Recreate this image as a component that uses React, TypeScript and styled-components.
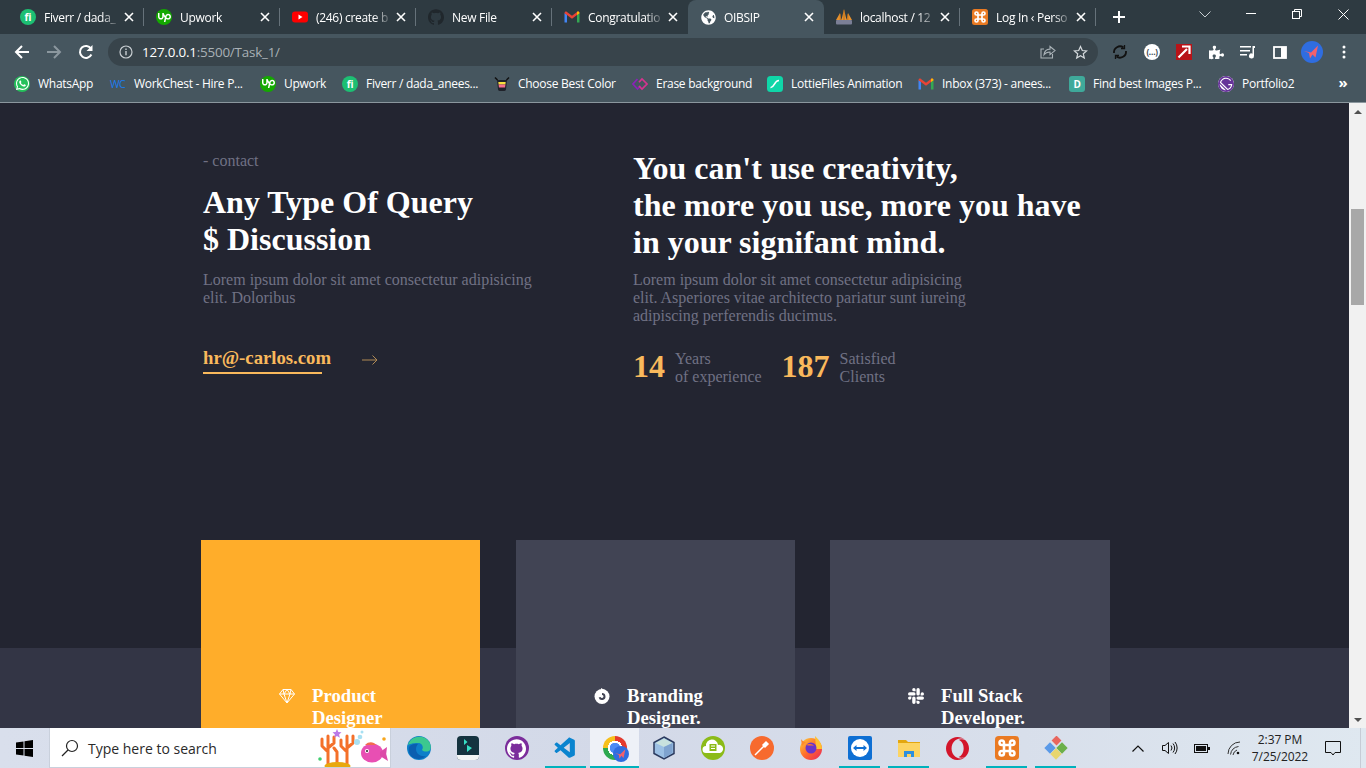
import React from "react";
import styled, { createGlobalStyle } from "styled-components";
import { FaWhatsapp, FaGlobeAmericas, FaPuzzlePiece } from "react-icons/fa";
import { SiUpwork, SiGithub, SiGatsby, SiOpera, SiSlack } from "react-icons/si";
import { VscVscode } from "react-icons/vsc";

const UI = `"Open Sans", "Noto Sans", sans-serif`;
const SERIF = `"Liberation Serif", serif`;

const Global = createGlobalStyle`
  html, body { margin: 0; padding: 0; height: 100%; overflow: hidden; }
  * { box-sizing: border-box; }
  #root { height: 768px; width: 1366px; }
`;

const Screen = styled.div`
  width: 1366px; height: 768px; display: flex; flex-direction: column; overflow: hidden;
  font-family: ${UI};
`;

/* ---------- browser chrome ---------- */
const TabStrip = styled.div`
  height: 34px; background: #2e3a41; display: flex; padding-left: 8px; flex: none;
`;
const Tab = styled.div<{ $active?: boolean; $sep?: boolean }>`
  width: 136px; height: 34px; display: flex; align-items: center; padding: 0 10px 0 12px; gap: 8px;
  position: relative; color: #fff; font-size: 12px;
  background: ${(p) => (p.$active ? "#46565f" : "transparent")};
  border-radius: ${(p) => (p.$active ? "8px 8px 0 0" : "0")};
  &::after {
    content: ""; position: absolute; right: 0; top: 8px; height: 18px; width: 1px;
    background: ${(p) => (p.$sep ? "#66727a" : "transparent")};
  }
`;
const TabTitle = styled.span`
  flex: 1; min-width: 0; white-space: nowrap; letter-spacing: -0.3px;
  -webkit-mask-image: linear-gradient(90deg, #000 80%, rgba(0, 0, 0, 0.25) 100%);
  mask-image: linear-gradient(90deg, #000 80%, rgba(0, 0, 0, 0.25) 100%);
`;
const NewTab = styled.div`
  width: 46px; height: 34px; display: flex; align-items: center; justify-content: center;
`;
const StripSpacer = styled.div`flex: 1;`;
const WinButton = styled.div`
  width: 46px; height: 28px; display: flex; align-items: center; justify-content: center;
`;
const Toolbar = styled.div`
  height: 32px; background: #46565f; display: flex; align-items: flex-end; padding: 0 6px; flex: none;
`;
const ToolButton = styled.div`
  width: 32px; height: 28px; flex: none; display: flex; align-items: center; justify-content: center;
`;
const AddressBar = styled.div`
  flex: 1; margin: 0 6px; height: 28px; border-radius: 14px; background: #38444b;
  display: flex; align-items: center; padding: 0 2px 0 11px; font-size: 13.4px; letter-spacing: -0.2px;
`;
const Url = styled.span`flex: 1; margin-left: 9px; color: #a9b1b6; b { font-weight: 400; color: #fff; }`;
const AddrIcon = styled.span`width: 32px; display: flex; justify-content: center;`;
const Bookmarks = styled.div`
  height: 37px; background: #46565f; border-bottom: 1px solid #8b979e; display: flex; align-items: center;
  padding: 0 0 1px 6px; gap: 1px; flex: none; position: relative;
`;
const Bookmark = styled.div<{ $w: number }>`
  width: ${(p) => p.$w}px; flex: none; display: flex; align-items: center; gap: 8px; padding-left: 8px;
  color: #fff; font-size: 12px; letter-spacing: -0.28px; white-space: nowrap;
`;
const More = styled.div`
  margin-left: auto; width: 46px; text-align: center; color: #fff; font-size: 15px; font-weight: 700; line-height: 14px; padding-bottom: 3px;
`;
const Disc = styled.span<{ $bg: string; $fg?: string; $r?: string }>`
  width: 16px; height: 16px; flex: none; display: inline-flex; align-items: center; justify-content: center;
  border-radius: ${(p) => p.$r ?? "50%"}; background: ${(p) => p.$bg}; color: ${(p) => p.$fg ?? "#fff"};
`;
const Wc = styled.span`
  width: 16px; flex: none; color: #1a7cf0; font-size: 10.5px; letter-spacing: -0.6px; line-height: 16px;
`;
const DiscLetter = styled.span`font-size: 10px; font-weight: 700; line-height: 1;`;
const Ellip = styled.span`font-size: 8px; font-weight: 700; color: #38444b; line-height: 1; letter-spacing: -0.5px;`;

/* ---------- page ---------- */
const Viewport = styled.div`flex: 1; min-height: 0; display: flex;`;
const Page = styled.main`
  flex: 1; min-width: 0; background: #232531; font-family: ${SERIF}; display: flex; flex-direction: column;
`;
const Intro = styled.section`
  height: 437px; flex: none; padding: 46px 0 0 203px; display: grid; grid-template-columns: 430px 480px; align-items: start;
`;
const LeftCol = styled.div`padding-top: 3px;`;
const RightCol = styled.div`padding-top: 1px;`;
const Eyebrow = styled.div`color: #707184; font-size: 16px; line-height: 18px;`;
const Heading = styled.h2<{ $top?: number }>`
  margin: ${(p) => p.$top ?? 0}px 0 0; color: #fff; font-size: 32px; line-height: 37px; font-weight: 700; white-space: nowrap;
`;
const Body = styled.p<{ $w: number; $mt: number }>`
  margin: ${(p) => p.$mt}px 0 0; width: ${(p) => p.$w}px; color: #707184; font-size: 16px; line-height: 18px;
`;
const EmailRow = styled.div`margin-top: 41px; display: flex; align-items: center; height: 20px;`;
const Email = styled.a`color: #f9b95c; font-size: 18.72px; font-weight: 700; line-height: 20px;`;
const ArrowSlot = styled.span`margin-left: 31px; display: flex; padding-top: 3px;`;
const EmailRule = styled.div`width: 119px; height: 2px; margin-top: 4px; background: #f9b95c;`;
const Stats = styled.div`margin-top: 23px; display: flex; gap: 20px;`;
const Stat = styled.div`display: flex; align-items: center; gap: 10px;`;
const StatNum = styled.span`color: #f9b95c; font-size: 32px; font-weight: 700; line-height: 36px; padding-bottom: 3px;`;
const StatLabel = styled.span`color: #707184; font-size: 16px; line-height: 18px;`;

const Services = styled.section`
  flex: 1; min-height: 0; overflow: hidden; display: flex; padding-left: 201px;
  background: linear-gradient(#232531 108px, #333545 108px);
`;
const Card = styled.article<{ $accent?: boolean; $w: number; $gap: number }>`
  width: ${(p) => p.$w}px; margin-right: ${(p) => p.$gap}px; flex: none; height: 300px;
  background: ${(p) => (p.$accent ? "#ffad2a" : "#414454")};
  padding: 145px 0 0 78px; display: flex; gap: 17px; align-items: flex-start;
`;
const CardIcon = styled.span`width: 16px; height: 22px; display: flex; align-items: center; flex: none; color: #fff;`;
const CardTitle = styled.h3`margin: 0; color: #fff; font-size: 18.72px; line-height: 22px; font-weight: 700;`;

const ScrollBar = styled.div`
  width: 17px; flex: none; background: #f1f1f1; display: flex; flex-direction: column; align-items: center; position: relative;
`;
const ScrollArrow = styled.div<{ $down?: boolean }>`
  width: 0; height: 0; border-left: 4px solid transparent; border-right: 4px solid transparent;
  ${(p) => (p.$down ? "border-top: 4px solid #505050; margin-top: auto; margin-bottom: 6px;" : "border-bottom: 4px solid #505050; margin-top: 7px;")}
`;
const Thumb = styled.div`width: 13px; height: 96px; background: #a8a8a8; margin-top: 95px;`;

/* ---------- taskbar ---------- */
const Taskbar = styled.footer`
  height: 40px; flex: none; display: flex; align-items: stretch;
  background: linear-gradient(90deg, #d9dfec 0%, #d3d9e8 45%, #d8dfeb 75%, #dfe8f0 100%);
`;
const StartBtn = styled.div`width: 49px; flex: none; display: flex; align-items: center; justify-content: center;`;
const SearchBox = styled.div`
  width: 342px; flex: none; background: #fff; border: 1px solid #c9d0dc; border-top: 0; display: flex; align-items: center;
  padding-left: 11px; gap: 9px; color: #2a2a2a; font-size: 14px;
  position: relative; margin-right: 3px;
`;
const SearchText = styled.span`padding-top: 2px;`;
const Coral = styled.span`margin-left: auto; display: flex; height: 39px;`;
const Slot = styled.div<{ $active?: boolean; $run?: boolean }>`
  width: 49px; flex: none; display: flex; align-items: center; justify-content: center; position: relative;
  background: ${(p) => (p.$active ? "#eef1f7" : "transparent")};
  &::after {
    content: ""; position: absolute; bottom: 0; height: 2px; background: ${(p) => (p.$run ? "#00b2bd" : "transparent")};
    left: ${(p) => (p.$active ? 0 : 4)}px; right: ${(p) => (p.$active ? 0 : 4)}px;
  }
`;
const ChromeLogo = styled.span`
  width: 24px; height: 24px; border-radius: 50%; position: relative; display: block;
  background:
    radial-gradient(circle, #4c8bf5 0 30%, #fff 31% 42%, transparent 43%),
    conic-gradient(from 30deg, #e33b2e 0 120deg, #2da94f 120deg 240deg, #f7c01b 240deg 330deg, #e33b2e 330deg);
`;
const ChromeBadge = styled.span`position: absolute; right: -2px; bottom: -2px; display: flex;`;
const GithubDisc = styled(Disc)`width: 24px; height: 24px;`;
const Tray = styled.div`margin-left: auto; display: flex; align-items: center;`;
const TrayIcon = styled.div`width: 32px; display: flex; justify-content: center; align-items: center;`;
const Clock = styled.div`
  width: 60px; text-align: center; color: #222; font-size: 12px; line-height: 17px; letter-spacing: -0.05px; padding-bottom: 1px; white-space: nowrap;
`;
const Notify = styled.div`
  width: 51px; padding-right: 5px; display: flex; justify-content: center; border-right: 1px solid #c6ccd6; height: 100%; align-items: center; margin-right: 5px;
`;

/* ---------- icons ---------- */
const Close = () => (
  <svg width="10" height="10" viewBox="0 0 10 10" style={{ flex: "none" }}>
    <path d="M1 1l8 8M9 1l-8 8" stroke="#fff" strokeWidth="1.6" />
  </svg>
);
const Youtube = () => (
  <svg width="16" height="16" viewBox="0 0 16 16" style={{ flex: "none" }}>
    <rect y="2.5" width="16" height="11" rx="3" fill="#f00" />
    <path d="M6.5 5.6l4 2.4-4 2.4z" fill="#fff" />
  </svg>
);
const Gmail = () => (
  <svg width="16" height="16" viewBox="0 0 16 16" style={{ flex: "none" }}>
    <path d="M0.5 13.5V4l2.5 1.5v8z" fill="#4285f4" />
    <path d="M15.5 13.5V4L13 5.5v8z" fill="#34a853" />
    <path d="M0.5 4.2C.5 2.6 2 2 3 2.9L8 6.8l5-3.9c1-.9 2.5-.3 2.5 1.3L13 6 8 9.8 3 6z" fill="#ea4335" />
    <path d="M13 2.9c1-.9 2.5-.3 2.5 1.3L13 6z" fill="#fbbc04" />
  </svg>
);
const PmaSail = () => (
  <svg width="16" height="16" viewBox="0 0 16 16" style={{ flex: "none" }}>
    <path d="M0 11L4 4l1.500 7zM5.500 11L8 0l2.500 11zM10.500 11L12 4l4 7z" fill="#e8922e" />
    <path d="M8 1v10M4.300 5v6M11.800 5v6" stroke="#a85f14" strokeWidth=".7" />
    <rect x="0" y="11" width="16" height="4.500" rx="1" fill="#7b7f96" />
  </svg>
);
const Xampp = ({ size }: { size: number }) => (
  <svg width={size} height={size} viewBox="0 0 16 16" style={{ flex: "none", display: "block" }}>
    <rect width="16" height="16" rx="2.500" fill="#ea7a22" />
    <path
      d="M6 6V4.500a1.500 1.500 0 1 0-1.500 1.500H11.500A1.500 1.500 0 1 0 10 4.500V11.500a1.500 1.500 0 1 0 1.500-1.500H4.500A1.500 1.500 0 1 0 6 11.500z"
      fill="none" stroke="#fff" strokeWidth="1.700"
    />
  </svg>
);
const CupIcon = () => (
  <svg width="16" height="16" viewBox="0 0 16 16" style={{ flex: "none" }}>
    <path d="M3 4h10l-1 9.5a2 2 0 0 1-2 1.5H6a2 2 0 0 1-2-1.5z" fill="#20222a" />
    <path d="M4.3 6h7.4l-.3 2.5H4.6z" fill="#f7e03c" />
    <path d="M4.6 8.5h6.8l-.3 3H4.9z" fill="#f56f8d" />
    <path d="M1 1.5L3.5 4M15 1.5L12.5 4" stroke="#111" strokeWidth="1.5" />
  </svg>
);
const EraseIcon = () => (
  <svg width="16" height="16" viewBox="0 0 16 16" style={{ flex: "none" }} fill="none">
    <path d="M5.5 3L1 8l4.5 5 3-3.2" stroke="#8a22b8" strokeWidth="1.7" />
    <path d="M7 6.3L10 3l5 5-5 5-3-3" stroke="#d6338f" strokeWidth="1.7" />
  </svg>
);
const LottieIcon = () => (
  <svg width="16" height="16" viewBox="0 0 16 16" style={{ flex: "none" }}>
    <rect width="16" height="16" rx="3.5" fill="#0fd6a8" />
    <path d="M3.5 11.5c4 .5 3.5-7 8.5-7" stroke="#fff" strokeWidth="1.6" fill="none" />
  </svg>
);
const Back = ({ dim }: { dim?: boolean }) => (
  <svg width="16" height="16" viewBox="0 0 16 16" fill="none" style={dim ? { transform: "scaleX(-1)" } : undefined}>
    <path d="M15 8H2M8 2L2 8l6 6" stroke={dim ? "#8b979e" : "#fff"} strokeWidth="2" />
  </svg>
);
const Reload = () => (
  <svg width="16" height="16" viewBox="0 0 16 16" fill="none">
    <path d="M13.4 10.5A6 6 0 1 1 13 4.6" stroke="#fff" strokeWidth="2" />
    <path d="M14.5 1v6h-6z" fill="#fff" />
  </svg>
);
const Info = () => (
  <svg width="14" height="14" viewBox="0 0 14 14" fill="none">
    <circle cx="7" cy="7" r="6" stroke="#c8ced2" strokeWidth="1.2" />
    <path d="M7 6v4.2M7 3.6v1.3" stroke="#c8ced2" strokeWidth="1.4" />
  </svg>
);
const Share = () => (
  <svg width="16" height="14" viewBox="0 0 16 14" fill="none" stroke="#aab3b8" strokeWidth="1.1">
    <path d="M10 1.5v2.6C6 4.2 4.3 6.5 4 9.8c1.4-2 3.200-2.800 6-2.800v2.600l5-4z" />
    <path d="M12.500 9v4H1V4h3" />
  </svg>
);
const Star = () => (
  <svg width="15" height="15" viewBox="0 0 15 15" fill="none">
    <path d="M7.500 1.500l1.800 4 4.300.4-3.300 2.900 1 4.200-3.800-2.200-3.800 2.200 1-4.200L1.400 5.900l4.300-.4z" stroke="#d5dadd" strokeWidth="1.200" />
  </svg>
);
const Sync = () => (
  <svg width="16" height="16" viewBox="0 0 16 16" fill="none" stroke="#111" strokeWidth="1.800">
    <path d="M2 9a6 6 0 0 1 9.500-5.500" />
    <path d="M14 7a6 6 0 0 1-9.500 5.500" />
    <path d="M12.500 1v3.500H9M3.500 15v-3.500H7" strokeWidth="1.300" />
  </svg>
);
const RedPick = () => (
  <svg width="16" height="16" viewBox="0 0 16 16">
    <rect width="16" height="16" fill="#b81318" />
    <path d="M2.500 13.500L11 5M6 2.500h7.500V10" stroke="#fff" strokeWidth="2.200" fill="none" />
  </svg>
);
const Queue = () => (
  <svg width="16" height="14" viewBox="0 0 16 14" fill="#fff">
    <rect y="1" width="11" height="1.500" />
    <rect y="5" width="10" height="1.500" />
    <rect y="9" width="7" height="1.500" />
    <path d="M12.500 1H15v2h-1v8a2.500 2.500 0 1 1-1.500-2.300z" />
  </svg>
);
const Panel = () => (
  <svg width="14" height="13" viewBox="0 0 14 13">
    <rect x="1" y="1" width="12" height="11" fill="none" stroke="#fff" strokeWidth="1.800" />
    <rect x="8" y="1" width="5" height="11" fill="#fff" />
  </svg>
);
const Avatar = ({ size = 22 }: { size?: number }) => (
  <svg width={size} height={size} viewBox="0 0 22 22" style={{ display: "block" }}>
    <circle cx="11" cy="11" r="11" fill="#2f6de0" />
    <path d="M3 10l7 1.500 7-7-2.500 12-3-3-2.500 4-1-5.500z" fill="#f2616b" />
  </svg>
);
const Dots = () => (
  <svg width="4" height="14" viewBox="0 0 4 14" fill="#fff">
    <circle cx="2" cy="2" r="1.500" /><circle cx="2" cy="7" r="1.500" /><circle cx="2" cy="12" r="1.500" />
  </svg>
);
const Arrow = () => (
  <svg width="16" height="10" viewBox="0 0 16 10" fill="none" stroke="#b08a55" strokeWidth="1">
    <path d="M0 5h15M10.500 .5L15 5l-4.500 4.500" />
  </svg>
);
const Diamond = () => (
  <svg width="16" height="16" viewBox="0 0 16 16" fill="none" stroke="#fff" strokeWidth="1">
    <path d="M4 1.500h8l3.500 4.500L8 15 .5 6zM.5 6h15M5 6l3 9 3-9M4 1.500L5 6l3-4.500L11 6l1-4.500" />
  </svg>
);
const Swirl = () => (
  <svg width="16" height="16" viewBox="0 0 16 16">
    <circle cx="8" cy="8.500" r="7.500" fill="#fff" />
    <path d="M8 6a2.500 2.500 0 1 1-2.400 3.200" stroke="#414454" strokeWidth="2" fill="none" />
    <path d="M7 0L11.500 2.500 7 5z" fill="#fff" />
  </svg>
);
const WinLogo = () => (
  <svg width="17" height="17" viewBox="0 0 17 17" fill="#000">
    <path d="M0 2.500L7.500 1.400V8H0zM8.500 1.200L17 0v8H8.500zM0 9h7.500v6.600L0 14.500zM8.500 9H17v8l-8.500-1.200z" />
  </svg>
);
const Magnifier = () => (
  <svg width="18" height="18" viewBox="0 0 18 18" fill="none" stroke="#222" strokeWidth="1.200">
    <circle cx="11" cy="7" r="5.500" />
    <path d="M7 11l-6 6" />
  </svg>
);
const CoralFish = () => (
  <svg width="72" height="39" viewBox="0 0 72 39">
    <path
      d="M10 36V8M10 24L4 18V11M10 20l6-5V9M29 36V8M29 24l-6-6V12M29 20l6-5V8M19 36V24l-3-4"
      stroke="#f4702a" strokeWidth="3" fill="none" strokeLinecap="round" strokeLinejoin="round"
    />
    <ellipse cx="19.500" cy="38" rx="13" ry="4" fill="#e8a80e" />
    <path d="M19 1l1.300 3 3.200.300-2.400 2.200.700 3.200-2.800-1.700-2.800 1.700.700-3.200L14.500 4.300l3.200-.300z" fill="#bb7ae8" />
    <circle cx="2" cy="31" r="1.800" fill="#3fce6f" />
    <circle cx="42" cy="9" r="2.300" fill="#a8e0f2" />
    <circle cx="44" cy="4" r="1.500" fill="#a8e0f2" />
    <circle cx="39" cy="14" r="3" fill="#a8e0f2" />
    <circle cx="66" cy="11" r="1.800" fill="#f7a61c" />
    <ellipse cx="54" cy="25" rx="11" ry="9.500" fill="#e84fb3" />
    <path d="M62 24l7-5-.800 7 1.800 7-8-5z" fill="#dc4aa8" />
    <path d="M47 17c4-4 9-3 11 0z" fill="#f26a4f" />
    <circle cx="49" cy="23" r="2" fill="#fff" />
    <circle cx="49" cy="23" r="1" fill="#222" />
  </svg>
);
const Edge = () => (
  <svg width="24" height="24" viewBox="0 0 24 24">
    <circle cx="12" cy="12" r="12" fill="#0d7fc9" />
    <path d="M1 9C3 1 12-1 18 2c5 3 7 8 5 12-2 2-6 2-8 0 2-3 0-7-4-7-5 0-9 1-10 2z" fill="#3cc88f" />
    <path d="M9 13c0 5 5 8 10 7-3 3-8 4-12 2-4-2-6-6-5-11 1-2 6-4 9-3-1 1-2 3-2 5z" fill="#0a5fb0" />
  </svg>
);
const Filmora = () => (
  <svg width="22" height="24" viewBox="0 0 22 24">
    <rect width="22" height="24" rx="4" fill="#15333f" />
    <path d="M0 19h22v1a4 4 0 0 1-4 4H4a4 4 0 0 1-4-4z" fill="#f3f5f5" />
    <path d="M7 3l3.500 3L7 9zM10 9l5 3-5 4z" fill="#37e0c4" />
  </svg>
);
const Cube = () => (
  <svg width="24" height="24" viewBox="0 0 24 24">
    <path d="M12 1l10 5.500v11L12 23 2 17.500v-11z" fill="#9cc0e4" stroke="#2b3a5e" strokeWidth="1.500" />
    <path d="M12 2.500l8.500 4.500L12 11 3.500 7z" fill="#c9e2de" />
    <path d="M12 11v11l8.500-5V7z" fill="#7fa3cf" />
  </svg>
);
const GreenCloud = () => (
  <svg width="24" height="24" viewBox="0 0 24 24">
    <circle cx="12" cy="12" r="12" fill="#8cbb18" />
    <path d="M5 17a3.500 3.500 0 0 1 0-7 6 6 0 0 1 12-1 4 4 0 0 1 2 8z" fill="#fff" />
    <path d="M8.500 8h7v7h-7z" fill="#8cbb18" />
    <path d="M10 10h4M10 12.500h4" stroke="#fff" strokeWidth="1.200" />
  </svg>
);
const Postman = () => (
  <svg width="24" height="24" viewBox="0 0 24 24">
    <circle cx="12" cy="12" r="12" fill="#f76a2e" />
    <path d="M5 19l9-9M13 9l3-3 2 2-3 3z" stroke="#fff" strokeWidth="1.500" fill="#fff" />
  </svg>
);
const Firefox = () => (
  <svg width="24" height="24" viewBox="0 0 24 24">
    <defs>
      <linearGradient id="ff" x1="0" y1="0" x2="1" y2="1"><stop offset="0" stopColor="#ffd43a" /><stop offset=".5" stopColor="#ff6a2b" /><stop offset="1" stopColor="#e8245e" /></linearGradient>
    </defs>
    <circle cx="12" cy="13" r="11" fill="url(#ff)" />
    <path d="M16 0c3 3 7 7 7 13h-6z" fill="#ffc02e" />
    <path d="M2 3c1 2 3 3 5 3L3 10z" fill="#ff8a2b" />
    <circle cx="12" cy="12" r="5.500" fill="#6a35c8" />
    <path d="M7 9c3-2 7-1 8 1-2-1-5 0-8-1z" fill="#ff7a2b" />
  </svg>
);
const TeamViewer = () => (
  <svg width="24" height="24" viewBox="0 0 24 24">
    <rect width="24" height="24" rx="2" fill="#0e6fd3" />
    <circle cx="12" cy="12" r="9" fill="#fff" />
    <path d="M5 12l3.500-3v2h7V9l3.500 3-3.500 3v-2h-7v2z" fill="#0e6fd3" />
  </svg>
);
const Folder = () => (
  <svg width="22" height="22" viewBox="0 0 22 22">
    <path d="M0 3h8l2 2h12v3H0z" fill="#e3a70f" />
    <rect y="6" width="22" height="14" fill="#fcd462" />
    <path d="M6 20v-6h10v6h-3v-3H9v3z" fill="#2d8fe0" />
  </svg>
);
const GitExt = () => (
  <svg width="24" height="24" viewBox="0 0 24 24">
    <rect x="9" y="1" width="7" height="7" transform="rotate(45 12.500 4.500)" fill="#e8665e" />
    <rect x="2" y="8" width="8" height="8" transform="rotate(45 6 12)" fill="#5a9ae8" />
    <rect x="14" y="8" width="8" height="8" transform="rotate(45 18 12)" fill="#6cb04a" />
    <rect x="8" y="14" width="8" height="8" transform="rotate(45 12 18)" fill="#e8d66e" />
  </svg>
);
const Chevron = () => (
  <svg width="12" height="7" viewBox="0 0 12 7" fill="none"><path d="M.5 .5L6 6l5.500-5.500" stroke="#c8ced2" /></svg>
);
const Minimize = () => <svg width="10" height="2" viewBox="0 0 10 2"><rect width="10" height="1" fill="#fff" /></svg>;
const Restore = () => (
  <svg width="10" height="10" viewBox="0 0 10 10" fill="none" stroke="#fff"><rect x=".5" y="2.500" width="7" height="7" /><path d="M2.500 2.500V.5h7v7H7.500" /></svg>
);
const WinClose = () => (
  <svg width="11" height="11" viewBox="0 0 11 11"><path d="M.5 .5l10 10M10.500 .5l-10 10" stroke="#fff" /></svg>
);
const Plus = () => (
  <svg width="12" height="12" viewBox="0 0 12 12"><path d="M6 0v12M0 6h12" stroke="#fff" strokeWidth="2" /></svg>
);
const Caret = () => <svg width="12" height="7" viewBox="0 0 12 7" fill="none"><path d="M.5 6.500L6 1l5.500 5.500" stroke="#111" strokeWidth="1.200" /></svg>;
const Speaker = () => (
  <svg width="16" height="14" viewBox="0 0 16 14" fill="none" stroke="#111">
    <path d="M.5 4.500h2.500L6.500 1.500v11L3 9.500H.5z" />
    <path d="M9 4.500a4 4 0 0 1 0 5M11 2.500a7 7 0 0 1 0 9M13 1a9.500 9.500 0 0 1 0 12" />
  </svg>
);
const Battery = () => (
  <svg width="16" height="9" viewBox="0 0 16 9"><rect x=".5" y=".5" width="13" height="8" fill="none" stroke="#111" /><rect x="2" y="2" width="10" height="5" fill="#111" /><rect x="14" y="3" width="2" height="3" fill="#111" /></svg>
);
const Wifi = () => (
  <svg width="14" height="14" viewBox="0 0 14 14" fill="none" stroke="#333">
    <path d="M1 13a12 12 0 0 1 12-12M3.500 13.500a9.500 9.500 0 0 1 8-8M6 14a6.500 6.500 0 0 1 4-5" />
    <circle cx="11" cy="12" r="1.300" fill="#111" stroke="none" />
  </svg>
);
const Bubble = () => (
  <svg width="16" height="15" viewBox="0 0 16 15" fill="none" stroke="#111"><path d="M.5 .5h15v11H10l-2 2.500-2-2.500H.5z" /></svg>
);

const FiverrMark = () => <Disc $bg="#1dbf73"><DiscLetter>fi</DiscLetter></Disc>;
const UpworkMark = () => <Disc $bg="#14a800"><SiUpwork size={13} /></Disc>;

const tabs = [
  { t: "Fiverr / dada_", i: <FiverrMark />, sep: true },
  { t: "Upwork", i: <UpworkMark />, sep: true },
  { t: "(246) create b", i: <Youtube />, sep: true },
  { t: "New File", i: <Disc $bg="#2e3a41" $fg="#20272c"><SiGithub size={16} /></Disc>, sep: true },
  { t: "Congratulatio", i: <Gmail />, sep: false },
  { t: "OIBSIP", i: <Disc $bg="transparent"><FaGlobeAmericas size={15} /></Disc>, sep: false, active: true },
  { t: "localhost / 12", i: <PmaSail />, sep: true },
  { t: "Log In ‹ Perso", i: <Xampp size={16} />, sep: true },
];

const marks = [
  { t: "WhatsApp", w: 95, i: <Disc $bg="#25c15b"><FaWhatsapp size={15} /></Disc> },
  { t: "WorkChest - Hire P...", w: 149, i: <Wc>WC</Wc> },
  { t: "Upwork", w: 81, i: <UpworkMark /> },
  { t: "Fiverr / dada_anees...", w: 151, i: <FiverrMark /> },
  { t: "Choose Best Color", w: 137, i: <CupIcon /> },
  { t: "Erase background", w: 134, i: <EraseIcon /> },
  { t: "LottieFiles Animation", w: 150, i: <LottieIcon /> },
  { t: "Inbox (373) - anees...", w: 150, i: <Gmail /> },
  { t: "Find best Images P...", w: 148, i: <Disc $bg="#3fa99a" $r="3px"><DiscLetter>D</DiscLetter></Disc> },
  { t: "Portfolio2", w: 90, i: <Disc $bg="#fff" $fg="#663399"><SiGatsby size={16} /></Disc> },
];

const services = [
  { a: "Product", b: "Designer", i: <Diamond />, accent: true, w: 279, gap: 36 },
  { a: "Branding", b: "Designer.", i: <Swirl />, accent: false, w: 279, gap: 35 },
  { a: "Full Stack", b: "Developer.", i: <SiSlack size={16} />, accent: false, w: 280, gap: 0 },
];

export default function App() {
  return (
    <Screen>
      <Global />
      <TabStrip>
        {tabs.map((x) => (
          <Tab key={x.t} $active={x.active} $sep={x.sep}>
            {x.i}
            <TabTitle>{x.t}</TabTitle>
            <Close />
          </Tab>
        ))}
        <NewTab><Plus /></NewTab>
        <StripSpacer />
        <WinButton><Chevron /></WinButton>
        <WinButton><Minimize /></WinButton>
        <WinButton><Restore /></WinButton>
        <WinButton><WinClose /></WinButton>
      </TabStrip>
      <Toolbar>
        <ToolButton><Back /></ToolButton>
        <ToolButton><Back dim /></ToolButton>
        <ToolButton><Reload /></ToolButton>
        <AddressBar>
          <Info />
          <Url><b>127.0.0.1</b>:5500/Task_1/</Url>
          <AddrIcon><Share /></AddrIcon>
          <AddrIcon><Star /></AddrIcon>
        </AddressBar>
        <ToolButton><Sync /></ToolButton>
        <ToolButton><Disc $bg="#fff"><Ellip>(…)</Ellip></Disc></ToolButton>
        <ToolButton><RedPick /></ToolButton>
        <ToolButton><FaPuzzlePiece size={15} color="#fff" /></ToolButton>
        <ToolButton><Queue /></ToolButton>
        <ToolButton><Panel /></ToolButton>
        <ToolButton><Avatar /></ToolButton>
        <ToolButton><Dots /></ToolButton>
      </Toolbar>
      <Bookmarks>
        {marks.map((m) => (
          <Bookmark key={m.t} $w={m.w}>{m.i}<span>{m.t}</span></Bookmark>
        ))}
        <More>»</More>
      </Bookmarks>
      <Viewport>
        <Page>
          <Intro>
            <LeftCol>
              <Eyebrow>- contact</Eyebrow>
              <Heading $top={14}>Any Type Of Query<br />$ Discussion</Heading>
              <Body $w={340} $mt={13}>Lorem ipsum dolor sit amet consectetur adipisicing elit. Doloribus</Body>
              <EmailRow>
                <Email>hr@-carlos.com</Email>
                <ArrowSlot><Arrow /></ArrowSlot>
              </EmailRow>
              <EmailRule />
            </LeftCol>
            <RightCol>
              <Heading>You can't use creativity,<br />the more you use, more you have<br />in your signifant mind.</Heading>
              <Body $w={340} $mt={10}>Lorem ipsum dolor sit amet consectetur adipisicing elit. Asperiores vitae architecto pariatur sunt iureing adipiscing perferendis ducimus.</Body>
              <Stats>
                <Stat><StatNum>14</StatNum><StatLabel>Years<br />of experience</StatLabel></Stat>
                <Stat><StatNum>187</StatNum><StatLabel>Satisfied<br />Clients</StatLabel></Stat>
              </Stats>
            </RightCol>
          </Intro>
          <Services>
            {services.map((s) => (
              <Card key={s.a} $accent={s.accent} $w={s.w} $gap={s.gap}>
                <CardIcon>{s.i}</CardIcon>
                <CardTitle>{s.a}<br />{s.b}</CardTitle>
              </Card>
            ))}
          </Services>
        </Page>
        <ScrollBar>
          <ScrollArrow />
          <Thumb />
          <ScrollArrow $down />
        </ScrollBar>
      </Viewport>
      <Taskbar>
        <StartBtn><WinLogo /></StartBtn>
        <SearchBox>
          <Magnifier />
          <SearchText>Type here to search</SearchText>
          <Coral><CoralFish /></Coral>
        </SearchBox>
        <Slot><Edge /></Slot>
        <Slot><Filmora /></Slot>
        <Slot><GithubDisc $bg="#7b2d9b"><SiGithub size={19} /></GithubDisc></Slot>
        <Slot $run><VscVscode size={25} color="#0a84cf" /></Slot>
        <Slot $active $run>
          <ChromeLogo><ChromeBadge><Avatar size={16} /></ChromeBadge></ChromeLogo>
        </Slot>
        <Slot><Cube /></Slot>
        <Slot><GreenCloud /></Slot>
        <Slot><Postman /></Slot>
        <Slot><Firefox /></Slot>
        <Slot $run><TeamViewer /></Slot>
        <Slot $run><Folder /></Slot>
        <Slot><SiOpera size={23} color="#d3152a" /></Slot>
        <Slot $run><Xampp size={24} /></Slot>
        <Slot $run><GitExt /></Slot>
        <Tray>
          <TrayIcon><Caret /></TrayIcon>
          <TrayIcon><Speaker /></TrayIcon>
          <TrayIcon><Battery /></TrayIcon>
          <TrayIcon><Wifi /></TrayIcon>
          <Clock>2:37 PM<br />7/25/2022</Clock>
          <Notify><Bubble /></Notify>
        </Tray>
      </Taskbar>
    </Screen>
  );
}
